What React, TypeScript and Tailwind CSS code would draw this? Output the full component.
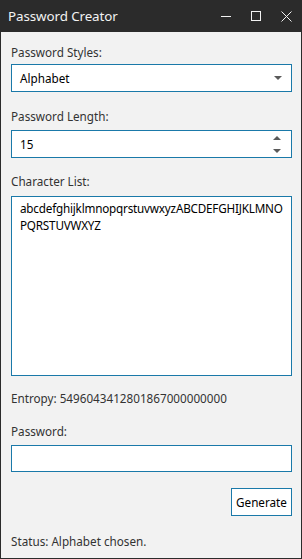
import React from "react";

// small triangle used by the select and the spinner
const Tri = ({ up = false }: { up?: boolean }) => (
    <svg width="8" height="4" viewBox="0 0 8 4" className="block">
        <path d={up ? "M0 4 L4 0 L8 4 Z" : "M0 0 L8 0 L4 4 Z"} fill="#5a5a5a" />
    </svg>
);

const Label = ({ text, className = "" }: { text: string; className?: string }) => (
    <p className={`text-[11.7px] leading-[16px] text-[#333333] ${className}`}>{text}</p>
);

const App = () => {
    return (
        <div
            className="w-[302px] h-[559px] flex flex-col bg-[#2b2b2b] border-x border-b border-[#2b2b2b] overflow-hidden"
            style={{ fontFamily: '"Noto Sans", "Open Sans", sans-serif' }}
        >
            {/* title bar */}
            <div className="h-[32px] shrink-0 flex items-center pl-[7px] text-[#f2f2f2]">
                <span className="text-[13.4px] leading-[16px] tracking-[-0.1px] flex-1">Password Creator</span>
                <div className="flex items-center h-full">
                    <div className="w-[30px] h-full flex items-center justify-center">
                        <svg width="10" height="10" viewBox="0 0 10 10">
                            <path d="M0 5.5 H10" stroke="#f2f2f2" strokeWidth="1" />
                        </svg>
                    </div>
                    <div className="w-[30px] h-full flex items-center justify-center">
                        <svg width="10" height="10" viewBox="0 0 10 10">
                            <rect x="0.5" y="0.5" width="9" height="9" fill="none" stroke="#f2f2f2" strokeWidth="1" />
                        </svg>
                    </div>
                    <div className="w-[30px] h-full flex items-center justify-center">
                        <svg width="11" height="11" viewBox="0 0 11 11">
                            <path d="M0.5 0.5 L10.5 10.5 M10.5 0.5 L0.5 10.5" stroke="#f2f2f2" strokeWidth="1" />
                        </svg>
                    </div>
                </div>
            </div>

            {/* content */}
            <div className="flex-1 flex flex-col bg-[#f2f2f2] pl-[10px] pr-[9px] pt-[12px]">
                <Label text="Password Styles:" />
                <div className="mt-[4px] h-[28px] flex items-center justify-between bg-white border border-[#1a79a9] pl-[8px] pr-[9px]">
                    <span className="text-[11.7px] leading-[16px] text-black">Alphabet</span>
                    <Tri />
                </div>

                <Label text="Password Length:" className="mt-[16px]" />
                <div className="mt-[6px] h-[28px] flex items-center justify-between bg-white border border-[#1a79a9] pl-[8px] pr-[10px]">
                    <span className="text-[11.7px] leading-[16px] text-black">15</span>
                    <div className="flex flex-col gap-[9px]">
                        <Tri up />
                        <Tri />
                    </div>
                </div>

                <Label text="Character List:" className="mt-[15px]" />
                <textarea
                    readOnly
                    value="abcdefghijklmnopqrstuvwxyzABCDEFGHIJKLMNOPQRSTUVWXYZ"
                    className="mt-[7px] h-[180px] resize-none bg-white border border-[#1a79a9] pl-[8px] pr-[5px] pt-[3px] text-[11.7px] leading-[17px] tracking-[-0.2px] text-black outline-none break-all"
                    style={{ fontFamily: '"Noto Sans", "Open Sans", sans-serif' }}
                />

                <Label text="Entropy: 5496043412801867000000000" className="mt-[14px]" />

                <Label text="Password:" className="mt-[17px]" />
                <input
                    readOnly
                    className="mt-[6px] h-[27px] bg-white border border-[#1a79a9] outline-none px-[8px] text-[11.7px]"
                />

                <div className="mt-[16px] flex justify-end">
                    <button className="w-[61px] h-[28px] bg-white border border-[#1a79a9] text-[11.7px] leading-[16px] text-black">
                        Generate
                    </button>
                </div>

                <Label text="Status: Alphabet chosen." className="mt-[17px]" />
            </div>
        </div>
    );
};

export default App;
